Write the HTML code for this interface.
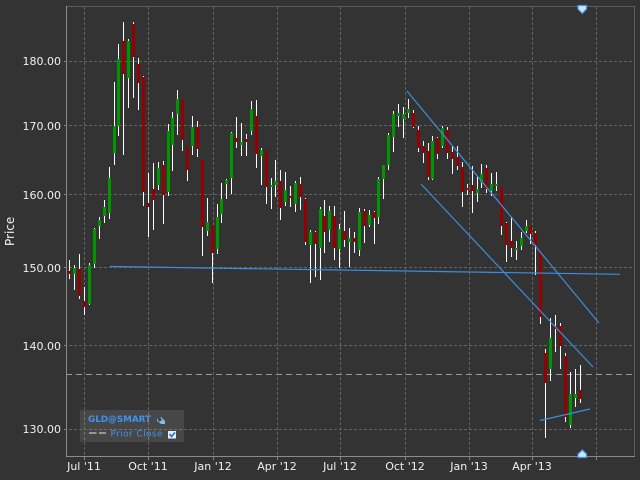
<!DOCTYPE html>
<html><head><meta charset="utf-8"><style>
html,body{margin:0;padding:0;background:#333;width:640px;height:480px;overflow:hidden}
svg{display:block;font-family:"DejaVu Sans","Liberation Sans",sans-serif}
</style></head><body>
<svg width="640" height="480" viewBox="0 0 640 480" xmlns="http://www.w3.org/2000/svg">
<rect width="640" height="480" fill="#333"/>
<g shape-rendering="crispEdges">
<g stroke="#636363" stroke-width="1" stroke-dasharray="3 2" fill="none">
<path d="M84.5 7V459M148.5 7V459M213.5 7V459M277.5 7V459M340.5 7V459M405.5 7V459M469.5 7V459M532.5 7V459M596.5 7V459"/>
<path d="M64 61.5H634M64 125.5H634M64 194.5H634M64 267.5H634M64 345.5H634M64 429.5H634"/>
</g>
<path d="M66 374.5H634" stroke="#999" stroke-dasharray="6 4" fill="none"/>
<path d="M67 6.5H634.5V456" stroke="#5c5c5c" fill="none"/>
<path d="M66.5 6V456.5H635" stroke="#8a8a8a" fill="none"/>
<path d="M84.5 457V460M148.5 457V460M213.5 457V460M277.5 457V460M340.5 457V460M405.5 457V460M469.5 457V460M532.5 457V460M596.5 457V460" stroke="#858585" fill="none"/>
<path d="M64 61.5H66M64 125.5H66M64 194.5H66M64 267.5H66M64 345.5H66M64 429.5H66" stroke="#858585" fill="none"/>
<path stroke="#fff" stroke-width="1" fill="none" d="M69.5 260V279M74.5 265V290M79.5 254V299M84.5 287V315M89.5 263V305M94.5 228V268M99.5 217V239M104.5 200V223M109.5 167V219M114.5 82V165M118.5 44V136M123.5 22V155M128.5 39V108M133.5 22V98M138.5 58V110M143.5 76V206M148.5 173V237M153.5 163V230M158.5 162V190M163.5 161V224M168.5 124V196M172.5 112V171M177.5 90V135M182.5 99V151M187.5 147V181M192.5 116V155M197.5 121V157M202.5 160V256M207.5 198V236M212.5 226V283M217.5 204V254M221.5 183V223M226.5 179V199M231.5 132V194M236.5 117V148M241.5 123V156M246.5 134V156M251.5 101V135M256.5 100V168M261.5 148V185M266.5 151V204M271.5 178V209M275.5 160V197M280.5 170V220M285.5 172V206M290.5 186V207M295.5 181V212M300.5 177V210M305.5 198V245M310.5 230V283M315.5 231V277M320.5 207V280M324.5 200V253M329.5 206V242M334.5 206V260M339.5 224V268M344.5 211V247M349.5 228V267M354.5 232V253M359.5 208V256M364.5 209V243M369.5 210V227M374.5 211V244M378.5 177V224M383.5 165V199M388.5 133V170M393.5 111V152M398.5 104V127M403.5 107V138M408.5 99V118M413.5 110V128M418.5 126V152M423.5 141V163M428.5 143V180M432.5 136V180M437.5 137V159M442.5 126V148M447.5 127V159M452.5 146V174M457.5 146V170M462.5 162V207M467.5 184V195M472.5 166V213M477.5 177V202M481.5 164V188M486.5 165V193M491.5 173V196M496.5 172V191M501.5 187V235M506.5 222V262M511.5 217V257M516.5 241V260M521.5 232V250M526.5 220V233M530.5 226V244M535.5 231V275M540.5 252V324M545.5 349V438M550.5 318V381M555.5 315V352M560.5 323V369M565.5 353V422M570.5 372V428M575.5 369V407M580.5 365V403"/>
<path stroke="#009600" stroke-width="3" fill="none" d="M74.5 268V274M89.5 265V304M94.5 229V264M99.5 220V226M104.5 207V216M109.5 178V213M114.5 126V153M118.5 59V126M128.5 41V78M158.5 168V185M168.5 131V192M172.5 118V145M177.5 99V114M192.5 127V146M207.5 222V231M217.5 217V249M221.5 199V214M226.5 180V184M231.5 133V178M241.5 142V145M251.5 109V131M261.5 150V156M271.5 185V187M275.5 181V185M285.5 190V202M295.5 183V204M310.5 232V245M320.5 209V248M329.5 211V230M339.5 229V249M349.5 238V242M359.5 212V250M369.5 215V225M378.5 179V217M383.5 165V179M388.5 135V165M393.5 114V137M398.5 113V116M403.5 114V119M408.5 109V113M432.5 141V179M442.5 128V146M477.5 189V193M481.5 174V183M491.5 184V191M496.5 184V186M516.5 248V250M521.5 238V246M526.5 226V231M550.5 338V369M570.5 394V425M575.5 394V398"/>
<path stroke="#960000" stroke-width="3" fill="none" d="M69.5 271V274M79.5 269V296M84.5 301V307M123.5 41V74M133.5 24V57M138.5 64V83M143.5 77V192M148.5 203V207M153.5 189V200M163.5 165V195M182.5 99V140M187.5 147V170M197.5 127V149M202.5 160V227M212.5 226V253M236.5 138V142M246.5 139V142M256.5 116V154M266.5 151V187M280.5 181V208M290.5 196V198M300.5 184V197M305.5 199V242M315.5 232V244M324.5 216V232M334.5 216V248M344.5 231V240M354.5 238V242M364.5 211V226M374.5 212V218M413.5 113V127M418.5 130V148M423.5 146V153M428.5 151V177M437.5 138V154M447.5 130V153M452.5 152V159M457.5 157V166M462.5 167V192M467.5 188V190M472.5 185V191M486.5 168V189M501.5 187V226M506.5 223V245M511.5 241V248M530.5 226V234M535.5 233V245M540.5 252V317M545.5 353V383M555.5 326V329M560.5 326V346M565.5 356V417M580.5 390V399"/>
</g>
<g stroke="#3a8ee0" fill="none" stroke-width="1.2">
<path d="M110 266.5L620 274.3"/>
<path d="M407 91L599 323"/>
<path d="M421 184L593 367"/>
<path d="M540 420.5L590 409"/>
</g>
<path d="M578 5.5H586.5V9L582.3 13.5L578 9Z" fill="#cfe4fb" stroke="#3f96ef" stroke-width="1.2"/>
<path d="M578 457.5H586.5V454L582.3 450L578 454Z" fill="#cfe4fb" stroke="#3f96ef" stroke-width="1.2"/>
<rect x="80" y="410" width="104" height="32" fill="#fff" fill-opacity=".1"/>
<g fill="#3f94ef" font-size="9">
<text x="88" y="422" font-weight="bold" font-size="9" textLength="63" lengthAdjust="spacingAndGlyphs">GLD@SMART</text>
<text x="110.5" y="436.5" textLength="52">Prior Close</text>
</g>
<path d="M89 433H96.5M99 433H106" stroke="#b0b0b0" stroke-width="1.5" fill="none"/>
<path d="M157 418L161 417L165 421L165 424L161 424L157 421Z" fill="#8fb6dc"/>
<path d="M157 418L160 417L162 420L159 422Z" fill="#2a4a66"/>
<rect x="168" y="431" width="8" height="7.5" fill="#e6eef8"/>
<path d="M169.5 434L171.5 436.5L175 432.5" stroke="#1f6fe0" stroke-width="1.6" fill="none"/>
<g fill="#f0f0f0" font-size="11" text-anchor="end">
<text x="61" y="65">180.00</text>
<text x="61" y="130">170.00</text>
<text x="61" y="199">160.00</text>
<text x="61" y="272">150.00</text>
<text x="61" y="350">140.00</text>
<text x="61" y="433">130.00</text>
</g>
<g fill="#f0f0f0" font-size="11" text-anchor="middle">
<text x="84" y="470">Jul '11</text>
<text x="148" y="470">Oct '11</text>
<text x="213" y="470">Jan '12</text>
<text x="277" y="470">Apr '12</text>
<text x="340" y="470">Jul '12</text>
<text x="405" y="470">Oct '12</text>
<text x="469" y="470">Jan '13</text>
<text x="532" y="470">Apr '13</text>
</g>
<text transform="translate(14 246) rotate(-90)" fill="#f0f0f0" font-size="12">Price</text>
</svg>
</body></html>
